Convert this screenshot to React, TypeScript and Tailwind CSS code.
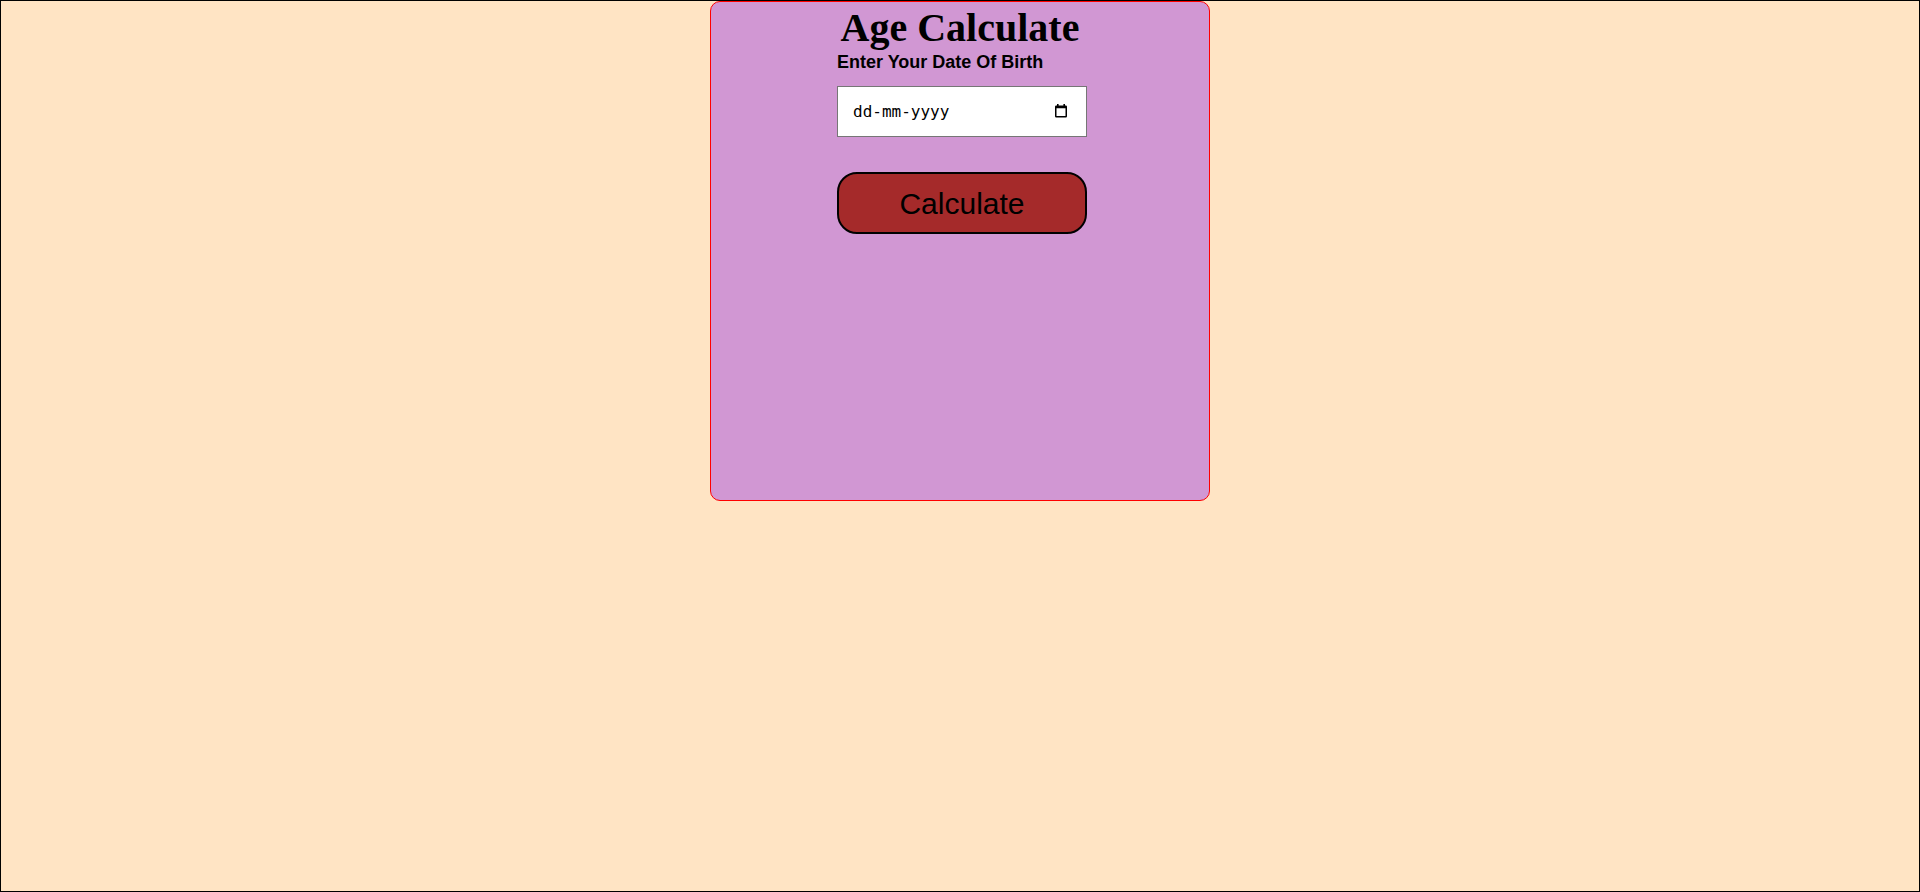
import { useState } from "react";

function CalendarIcon() {
  return (
    <svg width="14" height="14" viewBox="0 0 14 14" fill="currentColor" aria-hidden="true">
      <path d="M3 0h1.6v2.5H3zM9.4 0H11v2.5H9.4z" />
      <path
        fillRule="evenodd"
        d="M2.2 1.5h9.6A1.2 1.2 0 0 1 13 2.7v9.6a1.2 1.2 0 0 1-1.2 1.2H2.2A1.2 1.2 0 0 1 1 12.3V2.7a1.2 1.2 0 0 1 1.2-1.2zM2.5 4.3v7.7h9V4.3z"
      />
    </svg>
  );
}

export default function App() {
  const [dob, setDob] = useState("");

  const handleCalculate = () => {
    // compute age from dob
  };

  return (
    <div className="h-[892px] w-full border border-black bg-[#ffe4c4] box-border overflow-hidden">
      <div className="mx-auto w-[500px] h-[500px] border border-[#ff0000] rounded-[10px] bg-[#d197d3] box-border pt-[2px] flex flex-col">
        <h1 className="text-center text-[40px] leading-[47px] font-bold text-black font-['Liberation_Serif','Times_New_Roman',serif]">
          Age Calculate
        </h1>
        <div className="ml-[126px] w-[250px] flex flex-col font-['Liberation_Sans',Arial,sans-serif]">
          <label
            htmlFor="dob"
            className="mt-[1px] text-[18px] leading-[21px] font-bold text-black whitespace-nowrap"
          >
            Enter Your Date Of Birth
          </label>
          <div className="relative mt-[13px] w-[250px] h-[51px]">
            <input
              type="text"
              id="dob"
              value={dob}
              onChange={(e) => setDob(e.target.value)}
              placeholder="dd-mm-yyyy"
              className="w-full h-full border border-[#767676] bg-white pl-[15px] pr-[40px] text-[16px] text-black placeholder:text-black font-['DejaVu_Sans_Mono',monospace] box-border outline-none"
            />
            <span className="absolute right-[19px] top-[18px] flex text-black pointer-events-none">
              <CalendarIcon />
            </span>
          </div>
          <button
            type="button"
            onClick={handleCalculate}
            className="mt-[35px] w-[250px] h-[62px] border-2 border-black rounded-[20px] bg-[#a52a2a] text-[30px] text-black box-border"
          >
            Calculate
          </button>
        </div>
      </div>
    </div>
  );
}
